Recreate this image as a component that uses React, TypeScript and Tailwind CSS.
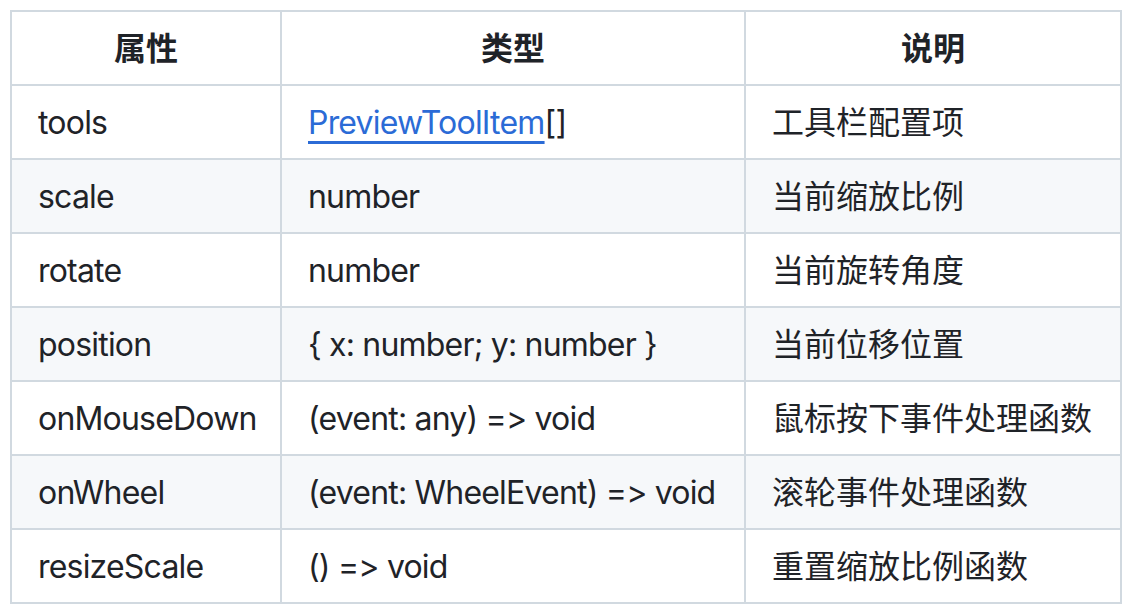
const rows: { name: string; type: React.ReactNode; desc: string }[] = [
  {
    name: "tools",
    type: (
      <>
        <a href="#" className="text-[#2b6bd6] underline decoration-[3px] underline-offset-[7px]">
          PreviewToolItem
        </a>
        []
      </>
    ),
    desc: "工具栏配置项",
  },
  { name: "scale", type: "number", desc: "当前缩放比例" },
  { name: "rotate", type: "number", desc: "当前旋转角度" },
  { name: "position", type: "{ x: number; y: number }", desc: "当前位移位置" },
  { name: "onMouseDown", type: "(event: any) => void", desc: "鼠标按下事件处理函数" },
  { name: "onWheel", type: "(event: WheelEvent) => void", desc: "滚轮事件处理函数" },
  { name: "resizeScale", type: "() => void", desc: "重置缩放比例函数" },
]

const cell = "border-2 border-[#d1d9e0] px-[26px] pt-[13px] pb-[11px] whitespace-nowrap"

export default function App() {
  return (
    <div
      className="min-h-[616px] bg-white p-[10px] text-[#1f2328]"
      style={{ fontFamily: 'Inter, "Noto Sans CJK SC", sans-serif' }}
    >
      <table className="w-[1110px] table-fixed border-collapse text-[32px] leading-[48px]">
        <colgroup>
          <col className="w-[270px]" />
          <col className="w-[464px]" />
          <col className="w-[376px]" />
        </colgroup>
        <thead>
          <tr className="bg-white">
            <th className={`${cell} text-center font-semibold`}>属性</th>
            <th className={`${cell} text-center font-semibold`}>类型</th>
            <th className={`${cell} text-center font-semibold`}>说明</th>
          </tr>
        </thead>
        <tbody>
          {rows.map((r, i) => (
            <tr key={r.name} className={i % 2 === 1 ? "bg-[#f6f8fa]" : "bg-white"}>
              <td className={`${cell} tracking-[-0.025em]`}>{r.name}</td>
              <td className={`${cell} tracking-[-0.025em]`}>{r.type}</td>
              <td className={cell}>{r.desc}</td>
            </tr>
          ))}
        </tbody>
      </table>
    </div>
  )
}
